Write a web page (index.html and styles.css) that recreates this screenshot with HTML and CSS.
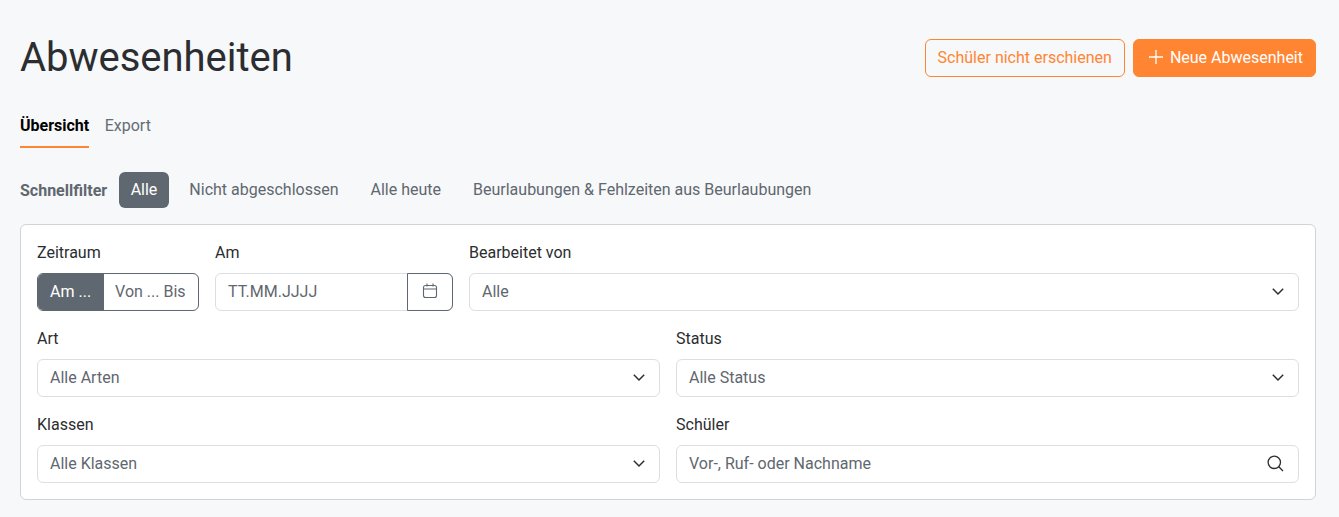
FILE: index.html
```html
<!DOCTYPE html>
<html lang="de">
<head>
    <meta charset="UTF-8">
    <meta name="viewport" content="width=device-width, initial-scale=1.0">
    <title>Abwesenheiten</title>
    <link rel="stylesheet" href="styles.css">
</head>
<body>
    <header class="page-header">
        <h1>Abwesenheiten</h1>
        <div class="header-actions">
            <button class="btn btn-outline">Schüler nicht erschienen</button>
            <button class="btn btn-primary">
                <svg width="16" height="16" viewBox="0 0 16 16" fill="none" stroke="currentColor" stroke-width="1.3"><path d="M8 1v14M1 8h14"/></svg>
                Neue Abwesenheit
            </button>
        </div>
    </header>

    <nav class="tabs">
        <a class="tab active">Übersicht</a>
        <a class="tab">Export</a>
    </nav>

    <div class="quick-filter">
        <span class="quick-label">Schnellfilter</span>
        <a class="pill active">Alle</a>
        <a class="pill">Nicht abgeschlossen</a>
        <a class="pill">Alle heute</a>
        <a class="pill">Beurlaubungen &amp; Fehlzeiten aus Beurlaubungen</a>
    </div>

    <section class="filter-card">
        <div class="filter-row first-row">
            <div class="field">
                <label>Zeitraum</label>
                <div class="toggle">
                    <span class="toggle-item active">Am ...</span>
                    <span class="toggle-item">Von ... Bis</span>
                </div>
            </div>
            <div class="field">
                <label>Am</label>
                <div class="date-input">
                    <span class="date-text">TT.MM.JJJJ</span>
                    <span class="date-btn">
                        <svg width="16" height="18" viewBox="0 0 16 18" fill="none" stroke="currentColor" stroke-width="1.1"><rect x="1.500" y="3.500" width="13" height="12" rx="2"/><path d="M1.500 7h13M5 1.500v3M11 1.500v3"/></svg>
                    </span>
                </div>
            </div>
            <div class="field">
                <label>Bearbeitet von</label>
                <div class="control select">Alle
                    <svg class="chevron" width="12" height="12" viewBox="0 0 12 12" fill="none" stroke="currentColor" stroke-width="1.5"><path d="M.8 3.800L6 9l5.200-5.200"/></svg>
                </div>
            </div>
        </div>
        <div class="filter-row half-row">
            <div class="field">
                <label>Art</label>
                <div class="control select">Alle Arten
                    <svg class="chevron" width="12" height="12" viewBox="0 0 12 12" fill="none" stroke="currentColor" stroke-width="1.5"><path d="M.8 3.800L6 9l5.200-5.200"/></svg>
                </div>
            </div>
            <div class="field">
                <label>Status</label>
                <div class="control select">Alle Status
                    <svg class="chevron" width="12" height="12" viewBox="0 0 12 12" fill="none" stroke="currentColor" stroke-width="1.5"><path d="M.8 3.800L6 9l5.200-5.200"/></svg>
                </div>
            </div>
        </div>
        <div class="filter-row half-row">
            <div class="field">
                <label>Klassen</label>
                <div class="control select">Alle Klassen
                    <svg class="chevron" width="12" height="12" viewBox="0 0 12 12" fill="none" stroke="currentColor" stroke-width="1.5"><path d="M.8 3.800L6 9l5.200-5.200"/></svg>
                </div>
            </div>
            <div class="field">
                <label>Schüler</label>
                <div class="control select">Vor-, Ruf- oder Nachname
                    <svg class="search" width="17" height="17" viewBox="0 0 17 17" fill="none" stroke="currentColor" stroke-width="1.3"><circle cx="7.300" cy="7.300" r="6.200"/><path d="M11.800 11.800L16 16"/></svg>
                </div>
            </div>
        </div>
    </section>
</body>
</html>
```

FILE: styles.css
```css
* {
    box-sizing: border-box;
}
body {
    margin: 0;
    padding: 0 23px 17px 20px;
    background-color: #f7f8fa;
    font-family: Roboto, Arial, sans-serif;
    font-size: 16px;
    color: #2b2d30;
}
.page-header {
    display: flex;
    justify-content: space-between;
    align-items: center;
    padding-top: 34px;
    height: 82px;
}
h1 {
    margin: 0;
    font-size: 40px;
    font-weight: 400;
    line-height: 48px;
    letter-spacing: -0.03px;
}
.header-actions {
    display: flex;
    gap: 8px;
}
.btn {
    display: flex;
    align-items: center;
    gap: 6px;
    height: 38px;
    padding: 0 12px 2px;
    border: 1px solid #ff8533;
    border-radius: 6px;
    font-family: inherit;
    font-size: 16px;
}
.btn-outline {
    background-color: transparent;
    color: #ff8533;
}
.btn-primary {
    padding-left: 14px;
    background-color: #ff8533;
    color: #fff;
}
.tabs {
    display: flex;
    gap: 15.500px;
    margin-top: 20px;
}
.tab {
    height: 46px;
    padding-top: 12px;
    line-height: 24px;
    color: #666d75;
}
.tab.active {
    font-weight: 700;
    color: #000;
    border-bottom: 2px solid #ff8533;
}
.quick-filter {
    display: flex;
    align-items: center;
    margin-top: 24px;
    color: #5f676f;
}
.quick-label {
    font-weight: 700;
    margin-right: 11.500px;
}
.pill {
    height: 36px;
    padding: 0 12px;
    margin-right: 8px;
    border-radius: 6px;
    line-height: 36px;
}
.pill.active {
    background-color: #5f6870;
    color: #fff;
}
.filter-card {
    margin-top: 16px;
    padding: 16px 16px 16px;
    background-color: #fff;
    border: 1px solid #d0d3d7;
    border-radius: 6px;
}
.filter-row {
    display: grid;
    gap: 16px;
    margin-bottom: 16px;
}
.filter-row:last-child {
    margin-bottom: 0;
}
.first-row {
    grid-template-columns: 162px 238px 1fr;
}
.half-row {
    grid-template-columns: 1fr 1fr;
}
label {
    display: block;
    height: 24px;
    line-height: 24px;
    margin-bottom: 8px;
}
.control {
    display: flex;
    align-items: center;
    justify-content: space-between;
    height: 38px;
    padding: 0 12px 2px;
    border: 1px solid #dbdee2;
    border-radius: 6px;
    color: #5f676f;
}
.chevron, .search {
    color: #2b2d30;
    flex-shrink: 0;
}
.chevron {
    margin-right: 2px;
}
.search {
    margin-right: 2px;
}
.toggle {
    display: flex;
    height: 38px;
    border: 1px solid #5f6870;
    border-radius: 6px;
    overflow: hidden;
    color: #5f676f;
}
.toggle-item {
    padding: 0 12px;
    line-height: 36px;
    white-space: nowrap;
}
.toggle-item.active {
    padding-right: 13px;
    background-color: #5f6870;
    color: #fff;
}
.toggle-item:last-child {
    padding-left: 11px;
}
.date-input {
    display: flex;
    height: 38px;
    border: 1px solid #dbdee2;
    border-radius: 6px;
    color: #5f676f;
}
.date-text {
    flex: 1;
    padding-left: 12px;
    line-height: 36px;
}
.date-btn {
    display: flex;
    align-items: center;
    justify-content: center;
    width: 46px;
    margin: -1px;
    padding-bottom: 2px;
    border: 1px solid #5f6870;
    border-radius: 0 6px 6px 0;
}
```
